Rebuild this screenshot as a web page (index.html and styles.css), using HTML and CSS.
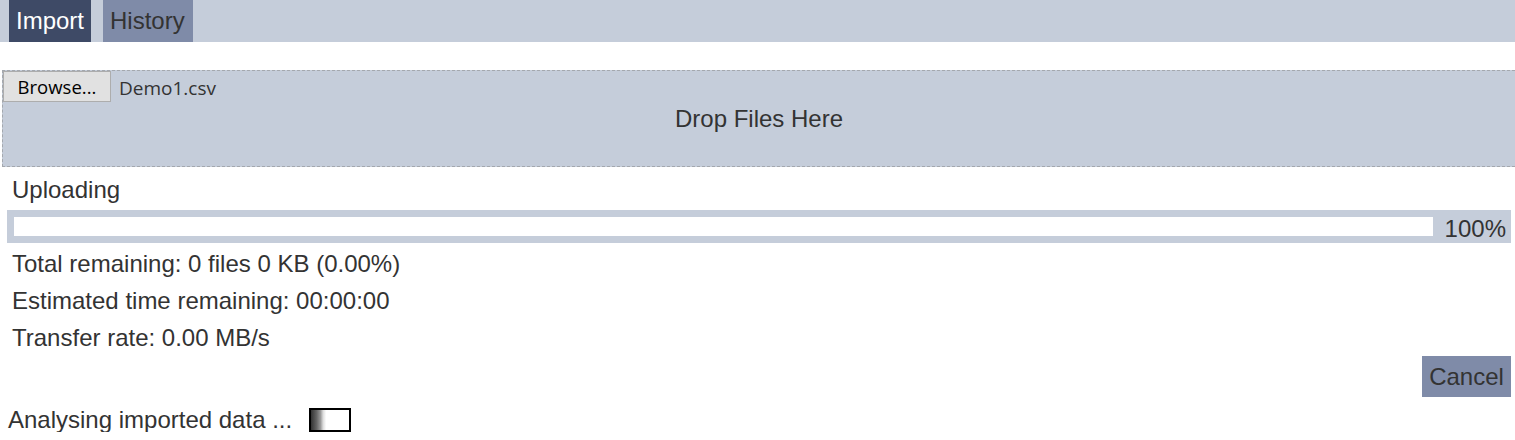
FILE: index.html
```html
<!DOCTYPE html>
<html>
<head>
<meta charset="utf-8">
<link rel="stylesheet" href="styles.css">
</head>
<body>
<div class="tabs">
  <div class="tab active">Import</div>
  <div class="tab">History</div>
</div>
<div class="dropzone">
  <div class="filerow">
    <button class="browse">Browse...</button>
    <span class="filename">Demo1.csv</span>
  </div>
  <div class="droptext">Drop Files Here</div>
</div>
<div class="upload">
  <div class="label">Uploading</div>
  <div class="progress">
    <div class="track"><div class="fill" style="width:100%"></div></div>
    <span class="pct">100%</span>
  </div>
  <div class="stats">
    <div class="stat">Total remaining: 0 files 0 KB (0.00%)</div>
    <div class="stat">Estimated time remaining: 00:00:00</div>
    <div class="stat">Transfer rate: 0.00 MB/s</div>
  </div>
  <div class="actions"><button class="cancel">Cancel</button></div>
</div>
<div class="analysing">
  <span>Analysing imported data ...</span>
  <span class="spinner"></span>
</div>
</body>
</html>
```
FILE: styles.css
```css
html, body { margin: 0; padding: 0; background: #fff; }
body { font-family: "Liberation Sans", Arial, sans-serif; font-size: 24px; color: #333; }
.tabs { display: flex; gap: 12px; height: 42px; background: #c5cdda; padding-left: 9px; }
.tab { display: flex; align-items: center; padding: 0 8px 0 7px; font-size: 24px; background: #7f8ba8; color: #333; }
.tab.active { background: #3e4a66; color: #fff; padding: 0 7px 0 7px; }
.dropzone { margin: 28px 0 0 2px; height: 95px; border: 1px dashed #a4a8ae; border-right: none; background: #c5cdda; display: flex; flex-direction: column; }
.filerow { display: flex; align-items: center; gap: 8px; height: 31px; }
.browse { font-family: "Open Sans", "DejaVu Sans", sans-serif; font-size: 18.5px; height: 31px; width: 108px; margin: 0; background: #e1e1e1; border: 1px solid #adadad; color: #000; padding: 0; }
.filename { font-family: "Open Sans", "DejaVu Sans", sans-serif; font-size: 19px; color: #333; padding-top: 2px; }
.droptext { text-align: center; font-size: 24px; margin-top: 3px; }
.upload { padding: 0 4px 0 7px; }
.label { padding-left: 5px; height: 43px; display: flex; align-items: center; padding-top: 3px; box-sizing: border-box; }
.progress { display: flex; align-items: center; height: 33px; background: #c5cdda; padding: 0 5px 0 7px; }
.track { flex: 1; height: 19px; background: #fff; margin-top: -1px; }
.fill { height: 100%; background: #fff; }
.pct { width: 73px; text-align: right; padding-top: 4px; }
.stats { padding-top: 2px; }
.stat { padding-left: 5px; height: 37px; line-height: 37px; }
.actions { display: flex; justify-content: flex-end; }
.cancel { font-family: "Liberation Sans", Arial, sans-serif; font-size: 24px; color: #333; background: #7f8ba8; border: none; height: 41px; width: 89px; padding: 0; }
.analysing { display: flex; align-items: center; gap: 17px; padding-left: 8px; height: 24px; margin-top: 11px; }
.spinner { width: 38px; height: 20px; border: 2px solid #000; background: linear-gradient(to right, #333 0%, #666 15%, #999 25%, #ddd 32%, #fff 40%, #fff 100%); }
```
